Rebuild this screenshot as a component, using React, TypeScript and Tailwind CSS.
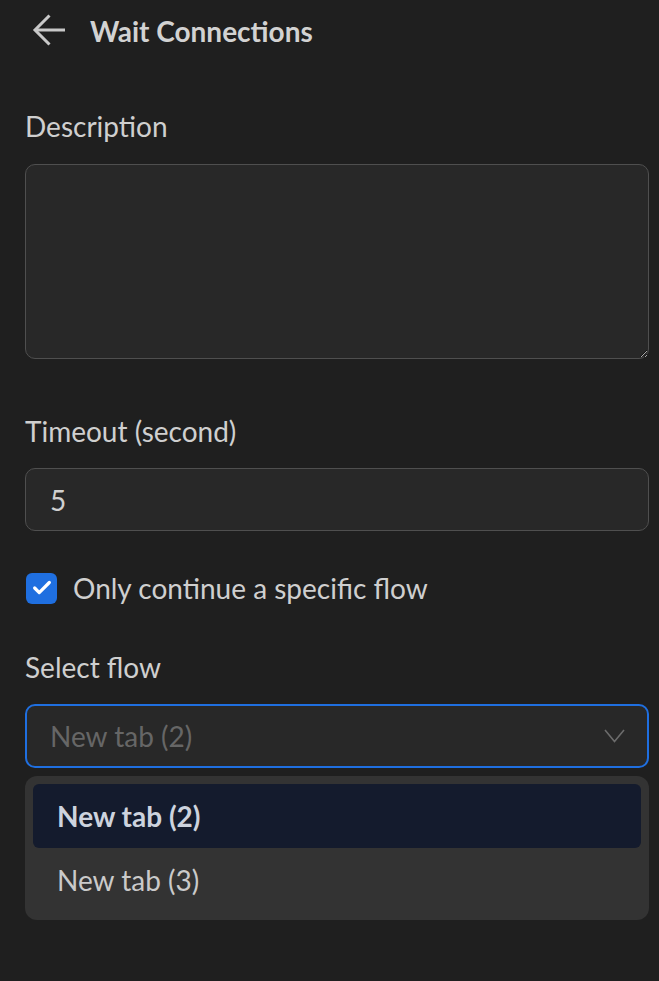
import { Check } from "lucide-react";

const flows = ["New tab (2)", "New tab (3)"];

const Label = ({ children }: { children: React.ReactNode }) => (
  <div className="text-[28px] leading-[36px] text-[#cfcfcf]">{children}</div>
);

export default function App() {
  return (
    <div
      className="min-h-[981px] w-[659px] bg-[#1f1f1f] pl-[25px] pr-[10px] pt-[13px]"
      style={{ fontFamily: "Lato, 'Open Sans', sans-serif" }}
    >
      {/* Header */}
      <div className="flex h-[36px] items-center">
        <svg
          className="ml-[7px] mt-[-2px]"
          width="34"
          height="32"
          viewBox="0 0 34 32"
          fill="none"
          stroke="#c8c8c8"
          strokeWidth="3"
        >
          <path d="M33 16H3" />
          <path d="M17.5 1.5L3 16L17.5 30.5" />
        </svg>
        <span className="ml-[24px] text-[28px] font-bold leading-[36px] text-[#d2d2d2]">
          Wait Connections
        </span>
      </div>

      {/* Description */}
      <div className="mt-[59px]">
        <Label>Description</Label>
        <textarea
          className="mt-[20px] block h-[195px] w-full resize-y rounded-[10px] border-[1.5px] border-[#4f4f4f] bg-[#282828] px-[24px] py-[16px] text-[28px] text-[#d0d0d0] outline-none"
          defaultValue=""
        />
      </div>

      {/* Timeout */}
      <div className="mt-[54px]">
        <Label>Timeout (second)</Label>
        <div className="mt-[19px] flex h-[63px] items-center rounded-[10px] border-[1.5px] border-[#4f4f4f] bg-[#282828] px-[24px] text-[28px] text-[#d0d0d0]">
          5
        </div>
      </div>

      {/* Checkbox */}
      <div className="mt-[39px] flex h-[36px] items-center">
        <div className="ml-[1px] flex h-[31px] w-[31px] items-center justify-center rounded-[6px] bg-[#1f6fe0]">
          <Check className="h-[22px] w-[22px] text-white" strokeWidth={3.5} />
        </div>
        <span className="ml-[16px] text-[28px] leading-[36px] text-[#cfcfcf]">
          Only continue a specific flow
        </span>
      </div>

      {/* Select flow */}
      <div className="mt-[43px]">
        <Label>Select flow</Label>
        <div className="mt-[19px] flex h-[64px] items-center justify-between rounded-[10px] border-2 border-[#1f6fe0] bg-[#282828] pl-[23px] pr-[22px]">
          <span className="text-[28px] text-[#666666]">New tab (2)</span>
          <svg width="21" height="14" viewBox="0 0 21 14" fill="none" stroke="#6c6c6c" strokeWidth="1.6">
            <path d="M1 1L10.5 12.5L20 1" />
          </svg>
        </div>
        <div className="mt-[8px] rounded-[12px] bg-[#333333] p-[8px]">
          {flows.map((f, i) => (
            <div
              key={f}
              className={
                i === 0
                  ? "flex h-[64px] items-center rounded-[6px] bg-[#141b2d] px-[24px] text-[28px] font-bold text-[#cdd3de]"
                  : "flex h-[64px] items-center rounded-[6px] px-[24px] text-[28px] text-[#cacaca]"
              }
            >
              {f}
            </div>
          ))}
        </div>
      </div>
    </div>
  );
}
